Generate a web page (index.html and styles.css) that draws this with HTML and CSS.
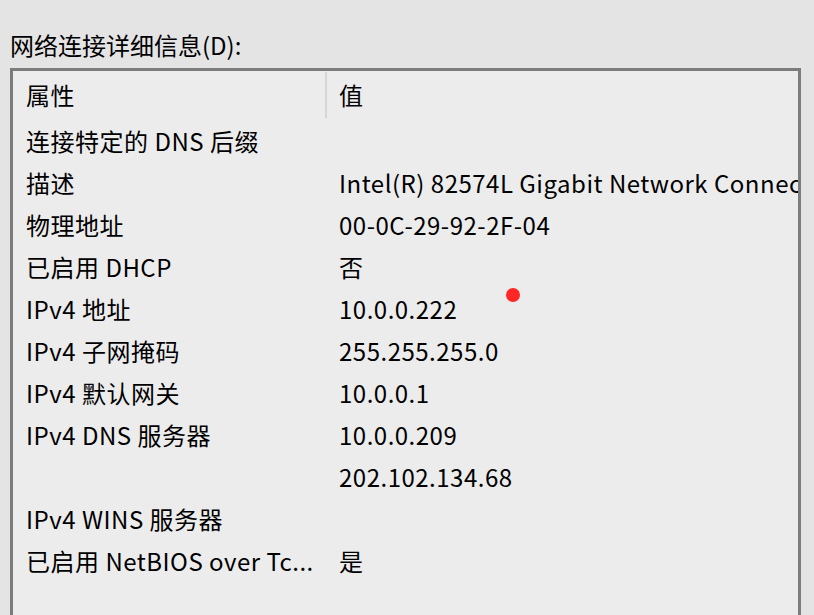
FILE: index.html
```html
<!DOCTYPE html>
<html lang="zh-CN">
<head>
<meta charset="utf-8">
<title>网络连接详细信息</title>
<link rel="stylesheet" href="styles.css">
</head>
<body>
<div class="dialog">
  <div class="label">网络连接详细信息(D):</div>
  <div class="listbox">
    <div class="header">
      <div class="hcell">属性</div>
      <div class="hcell value-head">值</div>
    </div>
    <div class="rows">
      <div class="cell">连接特定的 DNS 后缀</div><div class="cell val"></div>
      <div class="cell">描述</div><div class="cell val">Intel(R) 82574L Gigabit Network Connection</div>
      <div class="cell">物理地址</div><div class="cell val">00-0C-29-92-2F-04</div>
      <div class="cell">已启用 DHCP</div><div class="cell val">否</div>
      <div class="cell">IPv4 地址</div><div class="cell val">10.0.0.222</div>
      <div class="cell">IPv4 子网掩码</div><div class="cell val">255.255.255.0</div>
      <div class="cell">IPv4 默认网关</div><div class="cell val">10.0.0.1</div>
      <div class="cell">IPv4 DNS 服务器</div><div class="cell val">10.0.0.209</div>
      <div class="cell"></div><div class="cell val">202.102.134.68</div>
      <div class="cell">IPv4 WINS 服务器</div><div class="cell val"></div>
      <div class="cell">已启用 NetBIOS over Tc...</div><div class="cell val">是</div>
    </div>
  </div>
  <div class="dot"></div>
</div>
</body>
</html>
```
FILE: styles.css
```css
html, body {
  margin: 0;
  padding: 0;
  background: #e4e4e4;
  overflow: hidden;
  height: 615px;
}
.dialog {
  position: relative;
  width: 814px;
  height: 615px;
  overflow: hidden;
  font-family: "Noto Sans CJK SC", "Noto Sans", sans-serif;
  font-size: 24px;
  color: #000;
}
.label {
  padding: 30px 0 0 10px;
  height: 68px;
  line-height: 30px;
  box-sizing: border-box;
}
.listbox {
  margin-left: 10px;
  width: 791px;
  height: 547px;
  box-sizing: border-box;
  border: 3px solid #7c7c7c;
  border-bottom: none;
  background: #ececec;
  overflow: hidden;
  white-space: nowrap;
  letter-spacing: 0.5px;
}
.header {
  display: grid;
  grid-template-columns: 312px 1fr;
  height: 49px;
}
.hcell {
  padding: 9px 0 0 13px;
  line-height: 30px;
}
.value-head {
  border-left: 2px solid #d6d6d6;
  height: 46px;
  margin-top: 1px;
  padding-top: 8px;
  padding-left: 12px;
  box-sizing: border-box;
}
.rows {
  display: grid;
  grid-template-columns: 312px 1fr;
  grid-auto-rows: 42px;
}
.cell {
  padding-left: 13px;
  line-height: 42px;
  overflow: hidden;
}
.val {
  padding-left: 14px;
}
.dot {
  position: absolute;
  left: 506px;
  top: 288px;
  width: 14px;
  height: 14px;
  border-radius: 50%;
  background: #ff2626;
}
```
